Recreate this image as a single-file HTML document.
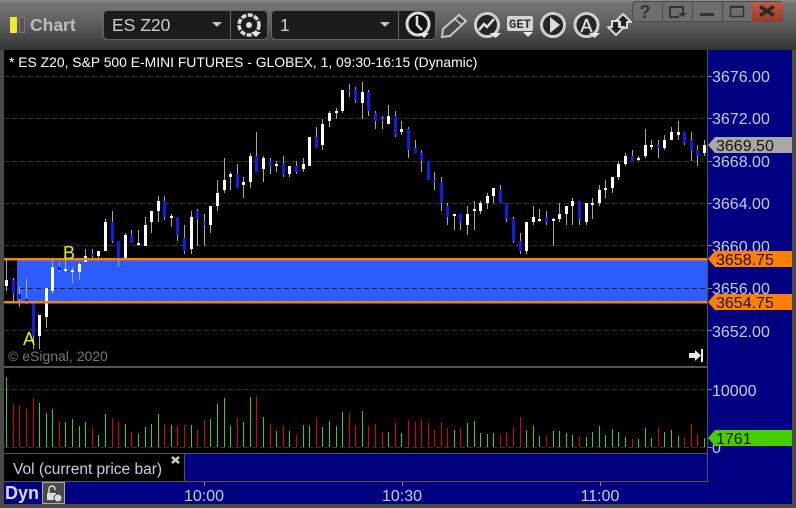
<!DOCTYPE html>
<html><head><meta charset="utf-8"><style>
html,body{margin:0;padding:0;background:#4a4a4a}
body{width:796px;height:508px;overflow:hidden;position:relative;font-family:"Liberation Sans",sans-serif}
svg{position:absolute;left:0;top:0}
</style></head><body>
<svg width="796" height="508" viewBox="0 0 796 508" font-family="Liberation Sans, sans-serif">
<defs><linearGradient id="g" x1="0" y1="0" x2="0" y2="1"><stop offset="0" stop-color="#7a7a7a"/><stop offset=".5" stop-color="#5c5c5c"/><stop offset="1" stop-color="#333"/></linearGradient>
<linearGradient id="r" x1="0" y1="0" x2="0" y2="1"><stop offset="0" stop-color="#c05a44"/><stop offset="1" stop-color="#9c3c2a"/></linearGradient></defs>
<rect width="796" height="508" fill="#4a4a4a"/>
<rect width="796" height="50" fill="url(#g)"/>
<rect x="0" y="0" width="796" height="2" fill="#8a8a8a"/>
<!-- left title -->
<rect x="10" y="17" width="7" height="16" fill="#f2e830"/>
<rect x="19.500" y="17.500" width="5" height="15" fill="#555" stroke="#777"/>
<text x="30" y="31" font-size="17.500" font-weight="bold" fill="#bdbdbd">Chart</text>
<!-- combos -->
<rect x="103.500" y="10.500" width="164" height="29" rx="4" fill="#1c1c1c" stroke="#666"/>
<path d="M230.500 11V39" stroke="#666"/>
<text x="112" y="31" font-size="17.500" fill="#c6cfd6">ES Z20</text>
<path d="M212 22h10l-5 5z" fill="#c4c4c4"/>
<rect x="271.500" y="10.500" width="164" height="29" rx="4" fill="#1c1c1c" stroke="#666"/>
<path d="M398.500 11V39" stroke="#666"/>
<text x="280" y="31" font-size="17.500" fill="#c6cfd6">1</text>
<path d="M380 22h10l-5 5z" fill="#c4c4c4"/>
<!-- gear -->
<circle cx="249" cy="25" r="10" fill="none" stroke="#dcdcdc" stroke-width="3.500" stroke-dasharray="5 1.500"/>
<circle cx="249" cy="25" r="3" fill="#dcdcdc"/>
<path d="M251 32h10l-5 5z" fill="#e8e8e8"/>
<!-- clock -->
<circle cx="418" cy="24" r="11" fill="#111" stroke="#dcdcdc" stroke-width="3"/>
<path d="M417 16v9l5 5" fill="none" stroke="#dcdcdc" stroke-width="2.500"/>
<path d="M419 33h10l-5 5z" fill="#e8e8e8"/>
<!-- pencil -->
<path d="M459 15l7 6-16 15-8 1 1-8z" fill="#4a4a4a" stroke="#c8c8c8" stroke-width="2"/>
<path d="M455 19l7 6" stroke="#c8c8c8" stroke-width="1.500"/>
<!-- trend -->
<circle cx="487" cy="25" r="11.500" fill="#262626" stroke="#d0d0d0" stroke-width="3"/>
<path d="M479 30l5-6 3 3 7-8" fill="none" stroke="#e4e4e4" stroke-width="2.400"/>
<path d="M490 33h11l-5.500 5z" fill="#e8e8e8"/>
<!-- GET -->
<rect x="507" y="16" width="26" height="15" rx="2" fill="#d4d4d4"/>
<text x="509" y="28" font-size="13" font-weight="bold" font-family="Liberation Mono, monospace" fill="#333" textLength="22" lengthAdjust="spacingAndGlyphs">GET</text>
<path d="M523 32h10l-5 5z" fill="#e8e8e8"/>
<!-- play -->
<circle cx="553" cy="25" r="11.500" fill="#262626" stroke="#d0d0d0" stroke-width="3"/>
<path d="M550 17l10 8-10 8z" fill="#dcdcdc"/>
<!-- A -->
<circle cx="586.500" cy="25" r="11.500" fill="#262626" stroke="#d0d0d0" stroke-width="3"/>
<text x="586.500" y="32" font-size="18" text-anchor="middle" fill="#dcdcdc" stroke="#dcdcdc" stroke-width=".4">A</text>
<path d="M589 33h11l-5.500 5z" fill="#e8e8e8"/>
<!-- arrows -->
<path d="M623 14l8 8-4 0 0 6-7 0 0-6-5 0z" fill="#222" stroke="#d8d8d8" stroke-width="2" stroke-linejoin="round"/>
<path d="M616 35l-8-8 4 0 0-6 7 0 0 6 5 0z" fill="#222" stroke="#d8d8d8" stroke-width="2" stroke-linejoin="round"/>
<!-- window buttons -->
<rect x="632.500" y="1.500" width="150" height="20" rx="3" fill="#6e6e6e" stroke="#4c4c4c"/>
<rect x="752" y="2" width="31" height="19.500" rx="2" fill="url(#r)"/>
<path d="M662.500 2V21M692.500 2V21M722.500 2V21" stroke="#4a4a4a"/>
<text x="645" y="18" font-size="18" font-weight="bold" text-anchor="middle" fill="#333">?</text>
<path d="M679 17h-9V7h13v7" fill="none" stroke="#333" stroke-width="2"/>
<path d="M678 13h9l-4.500 4z" fill="#333"/>
<rect x="700" y="13" width="14" height="3" fill="#333"/>
<rect x="730.500" y="6.500" width="13" height="10" fill="none" stroke="#333" stroke-width="1.500"/>
<path d="M730 6h14v2h-14z" fill="#333"/>
<path d="M760 6.500l14 9M774 6.500l-14 9" stroke="#2a2a2a" stroke-width="3.500"/>

<!-- chart areas -->
<rect x="4" y="50" width="704" height="317" fill="#000"/>
<rect x="708" y="50" width="84" height="454" fill="#000080"/>
<rect x="4" y="368" width="704" height="85" fill="#000"/>
<rect x="4" y="454" width="180" height="27" fill="#000"/>
<rect x="185" y="454" width="522" height="27" fill="#000080"/>
<rect x="4" y="482" width="704" height="22" fill="#000080"/>
<!-- band -->
<rect x="17" y="259" width="690" height="43" fill="#2a5cff"/>
<!-- grid -->
<g stroke="#333" stroke-dasharray="5 3" shape-rendering="crispEdges">
<path d="M4 76.500H707M4 118.500H707M4 161.500H707M4 203.500H707M4 245.500H707M4 330.500H707M4 389.500H707M4 447.500H707"/>
<path d="M4 288.500H707" stroke="#1a1a1a"/>
</g>
<!-- candles -->
<path shape-rendering="crispEdges" fill="none" stroke="#a8a8a8" d="M6.500 259V291M13.500 278V301M19.500 286V307M26.500 278V304M33.500 302V349M39.500 315V349M46.500 288V328M52.500 259V294M59.500 262V272M65.500 259V272M72.500 267V283M79.500 262V280M85.500 249V262M92.500 249V259M98.500 251V259M105.500 219V251M112.500 211V243M118.500 241V267M125.500 233V259M131.500 230V243M138.500 230V246M145.500 217V246M151.500 211V233M158.500 196V222M164.500 196V220M171.500 214V227M177.500 217V241M184.500 225V254M191.500 211V254M197.500 209V246M204.500 214V246M210.500 206V233M217.500 180V211M224.500 158V193M230.500 172V190M237.500 164V188M243.500 177V198M250.500 153V188M256.500 132V172M263.500 156V182M270.500 158V174M276.500 161V172M283.500 156V177M289.500 166V177M296.500 161V174M303.500 158V172M316.500 127V148M322.500 119V150M329.500 111V127M336.500 108V119M342.500 90V113M349.500 84V97M355.500 87V103M362.500 82V119M368.500 90V116M375.500 111V129M382.500 116V129M388.500 105V124M395.500 111V137M401.500 121V135M408.500 127V158M415.500 140V153M421.500 150V172M434.500 172V190M441.500 177V211M447.500 203V225M454.500 214V230M460.500 214V230M467.500 206V235M474.500 201V230M480.500 201V214M487.500 193V209M493.500 188V203M500.500 185V203M506.500 203V222M513.500 217V243M520.500 233V254M526.500 222V254M533.500 206V225M539.500 209V222M546.500 211V225M553.500 218V246M559.500 203V222M566.500 206V225M572.500 198V225M579.500 201V225M586.500 203V225M592.500 198V219M599.500 185V206M605.500 180V198M612.500 177V193M618.500 161V180M625.500 153V166M632.500 150V161M638.500 156V161M645.500 129V158M651.500 140V150M658.500 140V158M664.500 135V150M671.500 127V140M678.500 121V140M684.500 132V145M691.500 132V161M697.500 145V166M704.500 140V156"/>
<path shape-rendering="crispEdges" fill="none" stroke="#fff" stroke-width="3" d="M6.500 280V286M39.500 315V336M46.500 288V317M52.500 267V291M65.500 269V271M72.500 270V272M79.500 264V272M85.500 256V262M98.500 251V256M105.500 222V251M125.500 235V259M138.500 243V245M145.500 225V246M151.500 211V222M158.500 201V211M171.500 216V218M191.500 217V249M210.500 206V225M217.500 193V206M224.500 180V190M230.500 174V177M243.500 182V185M250.500 156V182M263.500 158V169M276.500 164V166M289.500 166V174M303.500 164V169M309.500 137V166M322.500 124V145M329.500 113V121M336.500 111V113M342.500 90V111M362.500 92V103M388.500 116V124M401.500 129V132M454.500 214V216M467.500 214V225M474.500 209V211M480.500 203V211M487.500 196V203M493.500 188V196M526.500 222V251M533.500 217V222M539.500 219V221M553.500 219V221M559.500 214V219M566.500 206V214M572.500 201V206M586.500 203V222M592.500 203V205M599.500 190V203M605.500 188V190M612.500 177V188M618.500 164V177M625.500 156V164M638.500 158V160M645.500 145V156M651.500 145V147M664.500 140V148M671.500 132V140M678.500 132V135M704.500 145V153"/>
<path shape-rendering="crispEdges" fill="none" stroke="#0a1ee6" stroke-width="3" d="M13.500 280V294M19.500 294V299M26.500 299V302M33.500 302V336M59.500 267V270M92.500 254V256M112.500 222V241M118.500 241V259M131.500 235V243M164.500 201V217M177.500 217V235M184.500 238V251M197.500 211V219M204.500 222V225M237.500 174V188M256.500 156V172M270.500 161V166M283.500 164V174M296.500 166V172M316.500 137V148M349.500 90V92M355.500 90V100M368.500 92V111M375.500 113V121M382.500 119V121M395.500 116V135M408.500 129V150M415.500 148V153M421.500 153V161M428.500 161V180M434.500 180V182M441.500 182V203M447.500 206V217M460.500 214V222M500.500 190V203M506.500 203V219M513.500 219V241M520.500 241V251M546.500 217V222M579.500 201V219M632.500 156V161M658.500 145V148M684.500 132V143M691.500 140V150M697.500 150V156"/>
<!-- orange lines -->
<rect x="4" y="258" width="703" height="2.500" fill="#ff8000"/>
<rect x="4" y="301" width="703" height="2.500" fill="#ff8000"/>
<!-- volumes -->
<path shape-rendering="crispEdges" fill="none" stroke="#44d000" d="M6.500 377V447M39.500 403V447M46.500 413V447M52.500 409V447M65.500 422V447M72.500 419V447M79.500 426V447M85.500 422V447M98.500 435V447M105.500 414V447M125.500 424V447M138.500 434V447M145.500 427V447M151.500 424V447M158.500 414V447M171.500 425V447M191.500 425V447M210.500 419V447M217.500 404V447M224.500 398V447M230.500 426V447M243.500 422V447M250.500 397V447M263.500 417V447M276.500 431V447M289.500 431V447M303.500 425V447M309.500 426V447M322.500 427V447M329.500 421V447M336.500 426V447M342.500 412V447M362.500 411V447M388.500 432V447M401.500 433V447M454.500 430V447M467.500 423V447M474.500 421V447M480.500 433V447M487.500 434V447M493.500 433V447M526.500 430V447M533.500 426V447M539.500 436V447M553.500 431V447M559.500 431V447M566.500 433V447M572.500 435V447M586.500 437V447M592.500 432V447M599.500 426V447M605.500 435V447M612.500 429V447M618.500 432V447M625.500 437V447M638.500 439V447M645.500 428V447M651.500 438V447M664.500 432V447M671.500 430V447M678.500 436V447M704.500 438V447"/>
<path shape-rendering="crispEdges" fill="none" stroke="#e00000" d="M13.500 404V447M19.500 405V447M26.500 408V447M33.500 398V447M59.500 421V447M92.500 427V447M112.500 418V447M118.500 422V447M131.500 432V447M164.500 424V447M177.500 425V447M184.500 425V447M197.500 430V447M204.500 420V447M237.500 418V447M256.500 396V447M270.500 424V447M283.500 426V447M296.500 435V447M316.500 418V447M349.500 413V447M355.500 425V447M368.500 426V447M375.500 424V447M382.500 432V447M395.500 423V447M408.500 420V447M415.500 422V447M421.500 419V447M428.500 423V447M434.500 430V447M441.500 422V447M447.500 428V447M460.500 428V447M500.500 435V447M506.500 432V447M513.500 427V447M520.500 417V447M546.500 435V447M579.500 436V447M632.500 439V447M658.500 427V447M684.500 438V447M691.500 424V447M697.500 434V447"/>
<!-- text under tags -->
<g font-size="16" fill="#c4cdf0">
<text x="712" y="82">3676.00</text>
<text x="712" y="124">3672.00</text>
<text x="712" y="167">3668.00</text>
<text x="712" y="209">3664.00</text>
<text x="712" y="252">3660.00</text>
<text x="712" y="294">3656.00</text>
<text x="712" y="337">3652.00</text>
<text x="712" y="396">10000</text>
<text x="712" y="453">0</text>
<text x="204" y="501" text-anchor="middle">10:00</text>
<text x="402" y="501" text-anchor="middle">10:30</text>
<text x="600" y="501" text-anchor="middle">11:00</text>
</g>
<!-- dividers -->
<g fill="#555" shape-rendering="crispEdges">
<rect x="4" y="366" width="704" height="2"/>
<rect x="4" y="453" width="704" height="1"/>
<rect x="4" y="481" width="704" height="1"/>
<rect x="184" y="454" width="1" height="27"/>
<rect x="707" y="50" width="1" height="431"/>
</g>
<!-- ticks -->
<path shape-rendering="crispEdges" stroke="#888" d="M708 76.500h4M708 118.500h4M708 161.500h4M708 203.500h4M708 245.500h4M708 288.500h4M708 330.500h4M708 389.500h4M708 447.500h4M204.500 482v4M402.500 482v4M600.500 482v4"/>
<text x="9" y="67" font-size="13.900" fill="#fff">* ES Z20, S&amp;P 500 E-MINI FUTURES - GLOBEX, 1, 09:30-16:15 (Dynamic)</text>
<!-- tags -->
<path d="M708 145l7-8h77v16h-77z" fill="#a8a8a8"/>
<path d="M708 259l7-8h77v16h-77z" fill="#ff8000"/>
<path d="M708 302l7-8h77v16h-77z" fill="#ff8000"/>
<path d="M708 438l7-8h77v16h-77z" fill="#44d000"/>
<g font-size="16" fill="#1a1000">
<text x="716" y="151">3669.50</text>
<text x="716" y="265">3658.75</text>
<text x="716" y="308">3654.75</text>
<text x="716" y="444">1761</text>
</g>
<text x="23" y="345" font-size="18" fill="#e8f000">A</text>
<text x="63" y="259" font-size="18" fill="#e8f000">B</text>
<text x="8" y="361" font-size="14" fill="#777">© eSignal, 2020</text>
<path d="M689 353h6v-3l6 5.500-6 5.500v-3h-6z" fill="#e8e8e8"/>
<rect x="701" y="349" width="2" height="13" fill="#e8e8e8"/>
<text x="13" y="474" font-size="15.500" fill="#c4cfe8">Vol (current price bar)</text>
<path d="M172 457l7 6M179 457l-7 6" stroke="#c8c8c8" stroke-width="2.500"/>
<text x="5" y="499" font-size="18" font-weight="bold" fill="#d4d8f0">Dyn</text>
<rect x="42.500" y="482.500" width="22" height="21" fill="#4a4a4a" stroke="#aaa"/>
<path d="M47 493h9v7h-9z" fill="#ddd"/>
<path d="M49 493v-4a3 3 0 0 1 6 0v1" fill="none" stroke="#ddd" stroke-width="1.500"/>
<circle cx="58" cy="498" r="4" fill="#ddd" stroke="#4a4a4a"/>
</svg>
</body></html>
